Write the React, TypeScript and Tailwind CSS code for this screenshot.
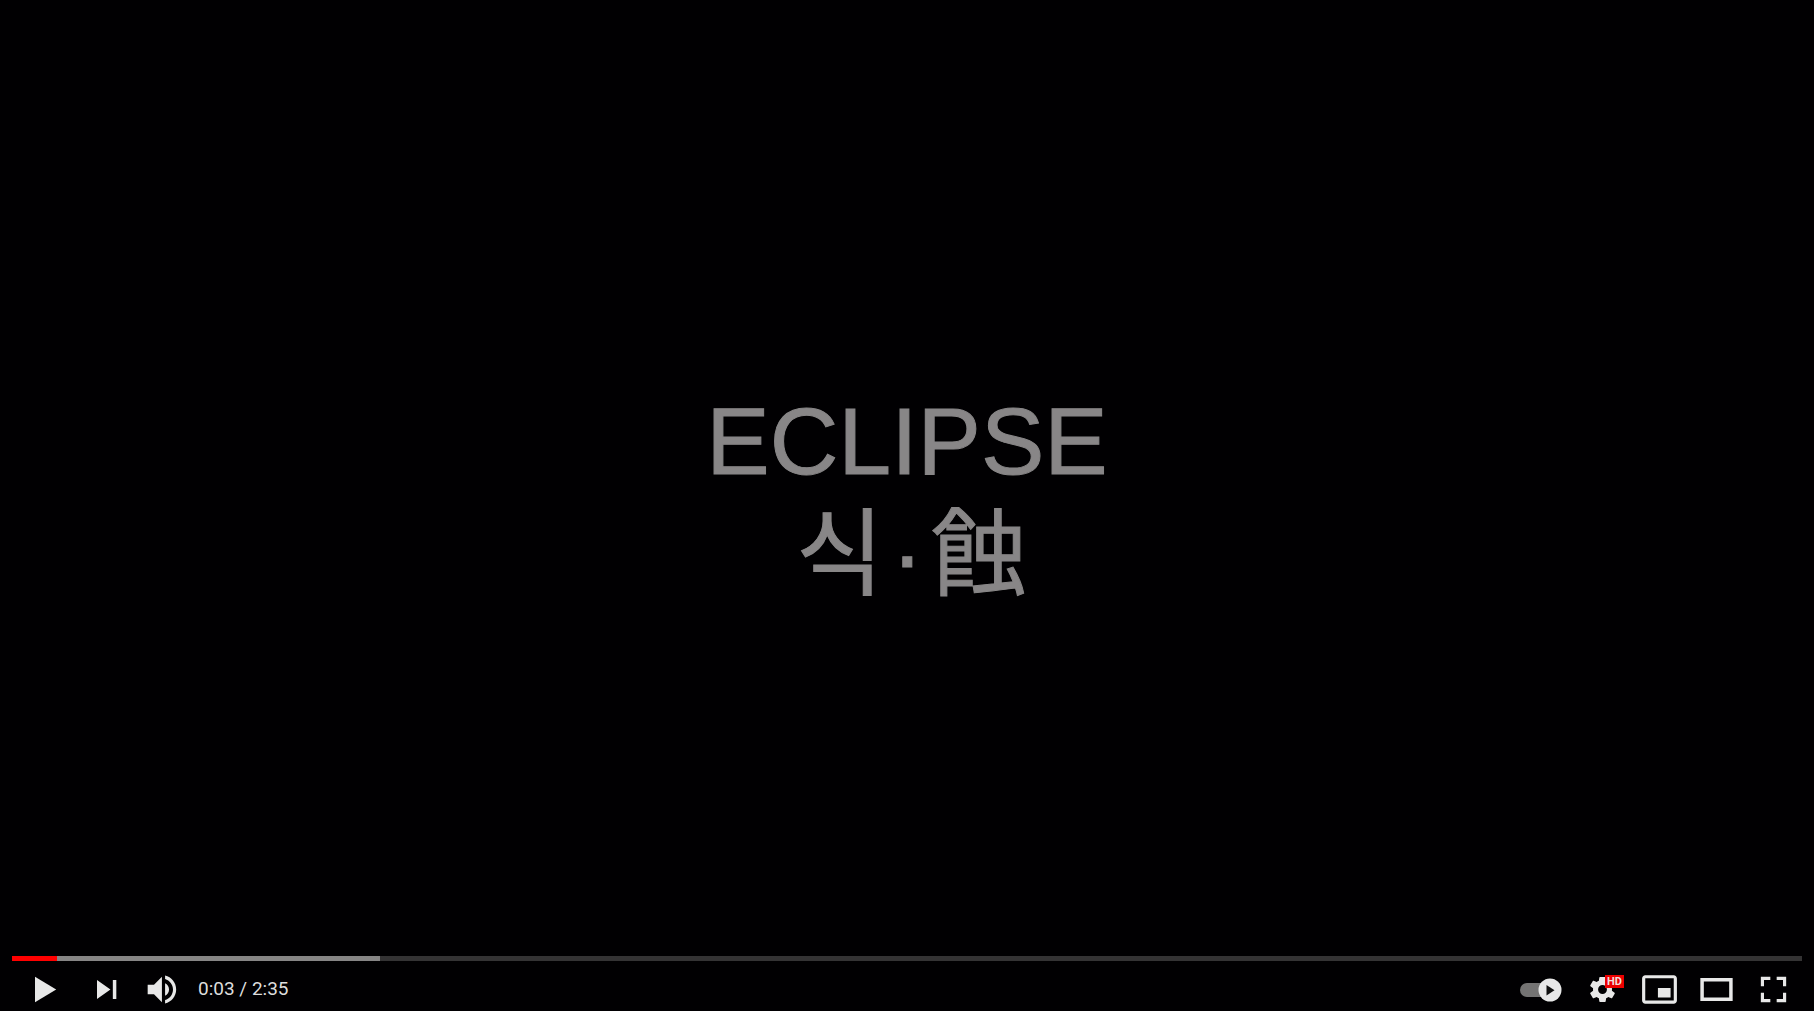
import { useState } from "react";
import type { ReactNode } from "react";

const DURATION = 155;
const BUFFERED = 20.56;

function formatTime(seconds: number) {
  return `${Math.floor(seconds / 60)}:${String(Math.floor(seconds % 60)).padStart(2, "0")}`;
}

function IconButton({ label, children }: { label: string; children: ReactNode }) {
  return (
    <button type="button" aria-label={label} className="relative size-[57px] shrink-0 cursor-pointer">
      <svg viewBox="0 0 36 36" className="size-full" fill="currentColor" fillRule="evenodd" aria-hidden="true">
        {children}
      </svg>
    </button>
  );
}

function SeekBar({ time, onSeek }: { time: number; onSeek: (t: number) => void }) {
  const played = (time / DURATION) * 100 + 0.58;
  const loaded = Math.max(BUFFERED, played);
  return (
    <input
      type="range"
      aria-label="Seek"
      min={0}
      max={DURATION}
      value={time}
      onChange={(e) => onSeek(Number(e.target.value))}
      className="block h-[5px] w-full cursor-pointer appearance-none [&::-webkit-slider-thumb]:size-0 [&::-webkit-slider-thumb]:appearance-none"
      style={{
        background: `linear-gradient(to right, #ff0000 ${played}%, #868585 ${played}%, #868585 ${loaded}%, #343334 ${loaded}%)`,
      }}
    />
  );
}

export default function App() {
  const [time, setTime] = useState(3);
  const [autoplay, setAutoplay] = useState(true);

  return (
    <main className="relative flex h-screen flex-col overflow-hidden bg-[#010002] text-[#e8e8e8]">
      <section className="flex flex-1 flex-col items-center justify-center pb-4 text-center font-['Liberation_Sans','Noto_Sans_CJK_KR',sans-serif] text-[95px] leading-[114px] text-[#888687] [-webkit-text-stroke:1px_#888687]">
        <h1>ECLIPSE</h1>
        <p lang="ko" className="pl-2">
          식<span className="px-2">·</span>蝕
        </p>
      </section>

      <div className="absolute inset-x-0 bottom-0 px-3">
        <SeekBar time={time} onSeek={setTime} />
        <div className="flex h-[50px] items-start justify-between">
          <div className="flex items-start pl-1">
            <div className="pr-[5px]">
              <IconButton label="Play">
                <path d="M12 10v16l13.4-8z" />
              </IconButton>
            </div>
            <IconButton label="Next">
              <path d="M12 24l8.5-6L12 12v12zM22 12v12h2.2V12h-2.2z" />
            </IconButton>
            <IconButton label="Mute">
              <path d="M8 21h4l5 5V10l-5 5H8v6zM19 14v8c1.48-.68 2.5-2.23 2.5-4 0-1.74-1.02-3.26-2.5-4zM19 11.29c2.89.86 5 3.54 5 6.71s-2.11 5.85-5 6.71v2.06c4.01-.91 7-4.49 7-8.77s-2.99-7.86-7-8.77v2.06z" />
            </IconButton>
            <div className="pl-1.5 font-[Roboto,sans-serif] text-[19px] leading-[55px] text-[#dddddd]">
              <span>{formatTime(time)}</span>
              <span> / </span>
              <span>{formatTime(DURATION)}</span>
            </div>
          </div>

          <div className="flex items-start">
            <button
              type="button"
              role="switch"
              aria-checked={autoplay}
              aria-label="Autoplay"
              onClick={() => setAutoplay(!autoplay)}
              className="h-[57px] w-16 cursor-pointer"
            >
              <svg viewBox="0 0 64 57" className="size-full" aria-hidden="true">
                <rect x="10" y="22" width="38" height="14" rx="7" fill="#747373" />
                <circle cx={autoplay ? 40 : 22} cy="29" r="11.5" fill="#e8e8e8" />
                {autoplay && <path d="M36.5 24v10.5l8-5.2z" fill="#111" />}
              </svg>
            </button>
            <div className="relative">
              <IconButton label="Settings">
                <path d="m23.94 18.78c.03-.25.05-.51.05-.78 0-.27-.02-.52-.05-.78l1.68-1.32c.15-.12.19-.33.09-.51l-1.6-2.76c-.09-.17-.31-.24-.48-.17l-1.99.8c-.41-.32-.86-.58-1.35-.78l-.3-2.12c-.02-.19-.19-.33-.39-.33h-3.2c-.2 0-.36.14-.39.33l-.3 2.12c-.48.2-.93.47-1.35.78l-1.99-.8c-.18-.07-.39 0-.48.17l-1.6 2.76c-.1.17-.05.39.09.51l1.68 1.32c-.03.25-.05.52-.05.78 0 .26.02.52.05.78l-1.68 1.32c-.15.12-.19.33-.09.51l1.6 2.76c.09.17.31.24.48.17l1.99-.8c.41.32.86.58 1.35.78l.3 2.12c.02.19.19.33.39.33h3.2c.2 0 .36-.14.39-.33l.3-2.12c.48-.2.93-.47 1.35-.78l1.99.8c.18.07.39 0 .48-.17l1.6-2.76c.09-.17.05-.39-.09-.51zM18 20.8a2.8 2.8 0 1 1 0-5.6 2.8 2.8 0 0 1 0 5.6z" />
              </IconButton>
              <span className="pointer-events-none absolute top-3.5 left-[31px] h-[13px] w-[19px] bg-[#ec0000] text-center font-[Roboto,sans-serif] text-[11px] leading-[13px] font-bold text-[#f0dede]">
                HD
              </span>
            </div>
            <IconButton label="Miniplayer">
              <path d="M25 17h-8v6h8v-6zM29 25V10.98C29 9.88 28.1 9 27 9H9c-1.1 0-2 .88-2 1.98V25c0 1.1.9 2 2 2h18c1.1 0 2-.9 2-2zM27 25.02H9V10.97h18z" />
            </IconButton>
            <IconButton label="Theater mode">
              <path d="M28.2 10.8v14.4H7.8V10.8zM10 13v10h16V13z" />
            </IconButton>
            <IconButton label="Full screen">
              <path d="M10 16h2v-4h4v-2h-6zM20 10v2h4v4h2v-6zM24 20v4h-4v2h6v-6zM12 20h-2v6h6v-2h-4z" />
            </IconButton>
          </div>
        </div>
      </div>
    </main>
  );
}
